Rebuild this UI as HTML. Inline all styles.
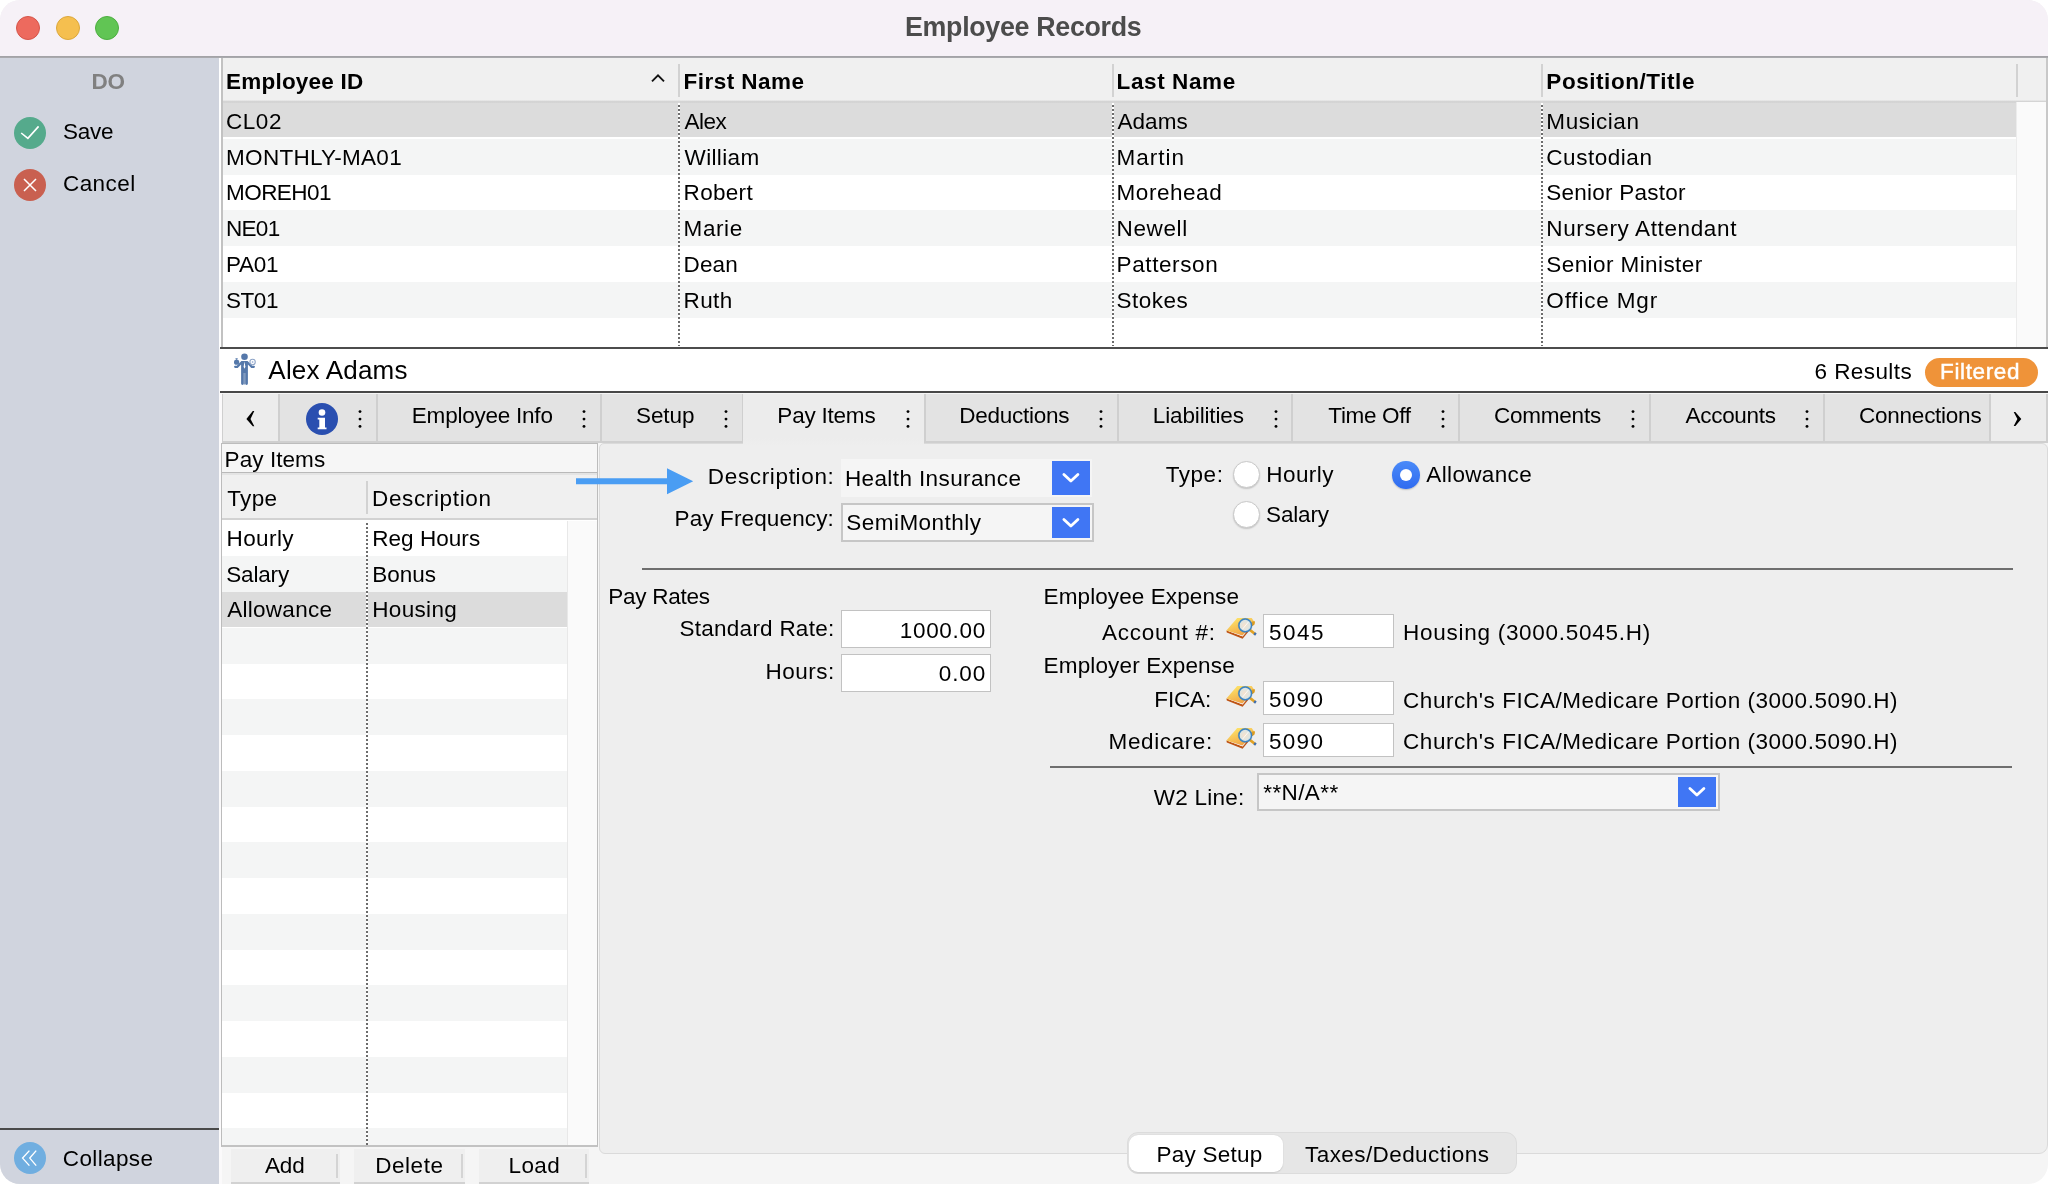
<!DOCTYPE html>
<html lang="en">
<head>
<meta charset="utf-8">
<title>Employee Records</title>
<style>
*{box-sizing:border-box;margin:0;padding:0}
html,body{width:2048px;height:1184px;overflow:hidden;background:#fff}
body{position:relative;font-family:"Liberation Sans",sans-serif;color:#000}
.win{position:absolute;left:0;top:0;width:2048px;height:1184px;border-radius:20px;overflow:hidden;background:#f5f5f5;will-change:transform}
.a{position:absolute}
.t{position:absolute;white-space:nowrap;line-height:30px;height:30px}
.titlebar{left:0;top:0;width:2048px;height:56px;background:#f6f1f7}
.tl{width:24px;height:24px;border-radius:50%;top:16px}
.sidebar{left:0;top:58px;width:219px;height:1126px;background:#d0d4de}
.row{left:222.6px;width:1793.4px}
.vdot{width:2px;background-image:linear-gradient(#fff 50%,#6c6c6c 50%);background-size:2px 4px}
.tab{top:394px;height:47px;background:#e3e3e3}
.tsep{top:394px;width:2px;height:47px;background:#cfcfcf}
.dots{width:4px;height:20px}
.inp{background:#fff;border:1.5px solid #c2c2c2}
.btn{background:#4076f4}
.pbtn{top:1149px;height:35px;background:#efefef;border-bottom:2px solid #d2d2d2}
.psep{top:1154px;width:2px;height:24px;background:#d4d4d4}
</style>
</head>
<body>
<div class="win">

<!-- ===== title bar ===== -->
<header class="a titlebar">
  <div class="a tl" style="left:16px;background:#ed6a5e;border:1px solid #d5554a"></div>
  <div class="a tl" style="left:56px;background:#f5bf4f;border:1px solid #dba73c"></div>
  <div class="a tl" style="left:95px;background:#61c554;border:1px solid #4dae41"></div>
</header>
<span class="t" style="left:905.00px;top:12.00px;font-size:26.8px;letter-spacing:-0.304px;font-weight:700;color:#4c4c4c">Employee Records</span>
<div class="a" style="left:0;top:55.8px;width:2048px;height:2px;background:linear-gradient(#a0a0a4,#acacb0)"></div>

<!-- ===== sidebar ===== -->
<aside class="a sidebar"></aside>
<svg class="a" style="left:14px;top:117px" width="32" height="32" viewBox="0 0 32 32"><circle cx="16" cy="16" r="16" fill="#55aa8c"/><path d="M7.2 16 L13.9 21.4 L24.6 9.4" fill="none" stroke="#fff" stroke-width="1.6"/></svg>
<svg class="a" style="left:14px;top:169px" width="32" height="32" viewBox="0 0 32 32"><circle cx="16" cy="16" r="16" fill="#c96050"/><path d="M10 10 L22 22 M22 10 L10 22" fill="none" stroke="#fff" stroke-width="1.5"/></svg>
<div class="a" style="left:0;top:1128px;width:219px;height:2px;background:#4a4a4a"></div>
<svg class="a" style="left:14px;top:1142px" width="32" height="32" viewBox="0 0 32 32"><circle cx="16" cy="16" r="16" fill="#70aee0"/><path d="M15.4 8.6 L8.6 16.1 L15.4 23.6 M22.2 8.6 L15.8 16.1 L22.2 23.6" fill="none" stroke="#fff" stroke-width="1.4"/></svg>
<span class="t" style="left:91.40px;top:67.00px;font-size:22.5px;letter-spacing:-0.149px;font-weight:700;color:#808080">DO</span>
<span class="t" style="left:63.00px;top:117.00px;font-size:22.5px;letter-spacing:-0.294px">Save</span>
<span class="t" style="left:63.00px;top:169.00px;font-size:22.5px;letter-spacing:0.430px">Cancel</span>
<span class="t" style="left:62.85px;top:1144.00px;font-size:22.5px;letter-spacing:0.372px">Collapse</span>

<div class="a" style="left:219px;top:58px;width:3px;height:1126px;background:#fbfafb"></div>
<!-- ===== main table ===== -->
<section>
<div class="a" style="left:219px;top:58px;width:1829px;height:290px;background:#fff"></div>
<div class="a" style="left:221px;top:58px;width:1.6px;height:290px;background:#c2c2c2"></div>
<div class="a" style="left:222.6px;top:58px;width:1823.4px;height:43px;background:#f0f0f0"></div>
<div class="a" style="left:222.6px;top:100.3px;width:1823.4px;height:3.2px;background:linear-gradient(#eee,#cfcfcf 60%,#d8d8d8)"></div>
<div class="a" style="left:2046px;top:58px;width:2px;height:290px;background:#c8c8c8"></div>
<div class="a" style="left:2016px;top:102px;width:30px;height:245px;background:#fafafa;border-left:1px solid #ececec"></div>
<!-- rows -->
<div class="a row" style="top:103.2px;height:34px;background:#dcdcdc"></div>
<div class="a row" style="top:138.75px;height:35.75px;background:#f4f5f5"></div>
<div class="a row" style="top:210.25px;height:35.75px;background:#f4f5f5"></div>
<div class="a row" style="top:281.75px;height:35.75px;background:#f4f5f5"></div>
<!-- header separators -->
<div class="a" style="left:678px;top:64px;width:2px;height:33px;background:#d2d2d2"></div>
<div class="a" style="left:1111.5px;top:64px;width:2px;height:33px;background:#d2d2d2"></div>
<div class="a" style="left:1541px;top:64px;width:2px;height:33px;background:#d2d2d2"></div>
<div class="a" style="left:2016px;top:64px;width:2px;height:33px;background:#d2d2d2"></div>
<!-- dotted column lines -->
<div class="a vdot" style="left:678px;top:103.4px;height:243px"></div>
<div class="a vdot" style="left:1111.5px;top:103.4px;height:243px"></div>
<div class="a vdot" style="left:1541px;top:103.4px;height:243px"></div>
<svg class="a" style="left:650px;top:73px" width="16" height="10" viewBox="0 0 16 10"><path d="M2 8.3 L8 2.3 L14 8.3" fill="none" stroke="#111" stroke-width="1.9"/></svg>
<span class="t" style="left:226.10px;top:67.00px;font-size:22.5px;letter-spacing:0.200px;font-weight:700">Employee ID</span>
<span class="t" style="left:683.60px;top:67.00px;font-size:22.5px;letter-spacing:0.446px;font-weight:700">First Name</span>
<span class="t" style="left:1116.60px;top:67.00px;font-size:22.5px;letter-spacing:0.596px;font-weight:700">Last Name</span>
<span class="t" style="left:1546.35px;top:67.00px;font-size:22.5px;letter-spacing:0.554px;font-weight:700">Position/Title</span>
<span class="t" style="left:226.10px;top:107.00px;font-size:22.5px;letter-spacing:0.506px">CL02</span>
<span class="t" style="left:684.60px;top:107.00px;font-size:22.5px;letter-spacing:-0.577px">Alex</span>
<span class="t" style="left:1117.60px;top:107.00px;font-size:22.5px;letter-spacing:0.005px">Adams</span>
<span class="t" style="left:1546.35px;top:107.00px;font-size:22.5px;letter-spacing:0.540px">Musician</span>
<span class="t" style="left:226.10px;top:143.00px;font-size:22.5px;letter-spacing:0.274px">MONTHLY-MA01</span>
<span class="t" style="left:684.60px;top:143.00px;font-size:22.5px;letter-spacing:0.340px">William</span>
<span class="t" style="left:1116.60px;top:143.00px;font-size:22.5px;letter-spacing:0.960px">Martin</span>
<span class="t" style="left:1546.35px;top:143.00px;font-size:22.5px;letter-spacing:0.529px">Custodian</span>
<span class="t" style="left:226.10px;top:178.00px;font-size:22.5px;letter-spacing:-0.578px">MOREH01</span>
<span class="t" style="left:683.60px;top:178.00px;font-size:22.5px;letter-spacing:0.301px">Robert</span>
<span class="t" style="left:1116.60px;top:178.00px;font-size:22.5px;letter-spacing:0.534px">Morehead</span>
<span class="t" style="left:1546.35px;top:178.00px;font-size:22.5px;letter-spacing:0.226px">Senior Pastor</span>
<span class="t" style="left:226.10px;top:214.00px;font-size:22.5px;letter-spacing:-0.744px">NE01</span>
<span class="t" style="left:683.60px;top:214.00px;font-size:22.5px;letter-spacing:0.574px">Marie</span>
<span class="t" style="left:1116.60px;top:214.00px;font-size:22.5px;letter-spacing:0.604px">Newell</span>
<span class="t" style="left:1546.35px;top:214.00px;font-size:22.5px;letter-spacing:0.621px">Nursery Attendant</span>
<span class="t" style="left:226.10px;top:250.00px;font-size:22.5px;letter-spacing:-0.354px">PA01</span>
<span class="t" style="left:683.60px;top:250.00px;font-size:22.5px;letter-spacing:0.089px">Dean</span>
<span class="t" style="left:1116.60px;top:250.00px;font-size:22.5px;letter-spacing:0.594px">Patterson</span>
<span class="t" style="left:1546.35px;top:250.00px;font-size:22.5px;letter-spacing:0.409px">Senior Minister</span>
<span class="t" style="left:226.10px;top:286.00px;font-size:22.5px;letter-spacing:-0.489px">ST01</span>
<span class="t" style="left:683.60px;top:286.00px;font-size:22.5px;letter-spacing:0.344px">Ruth</span>
<span class="t" style="left:1116.60px;top:286.00px;font-size:22.5px;letter-spacing:0.451px">Stokes</span>
<span class="t" style="left:1546.35px;top:286.00px;font-size:22.5px;letter-spacing:0.826px">Office Mgr</span>
</section>
<div class="a" style="left:220px;top:346.8px;width:1828px;height:2.6px;background:#4c4c4c"></div>

<!-- ===== name bar ===== -->
<section>
<div class="a" style="left:220px;top:349.4px;width:1828px;height:41.6px;background:#fff"></div>
<svg class="a" style="left:232px;top:352px" width="26" height="36" viewBox="0 0 26 36">
 <g fill="#5578aa">
  <circle cx="12.5" cy="4.7" r="3.3"/>
  <path d="M9.4 9 H15.6 L20.2 13.8 H21.9 a1.05 1.05 0 0 1 0 2.1 H19.3 L15.9 12.6 V31.6 a1.35 1.35 0 0 1 -2.7 0 V21 h-1.4 V31.6 a1.35 1.35 0 0 1 -2.7 0 V12.6 L5.7 15.9 H3.1 a1.05 1.05 0 0 1 0 -2.1 H4.8 Z"/>
  <rect x="11.8" y="20" width="1.4" height="12.5" opacity=".75"/>
  <circle cx="4.6" cy="10.2" r="2.6"/>
  <path d="M3.2 6.3 l1.4 1.7 l1.4 -1.7 z"/>
 </g>
 <circle cx="20.6" cy="10" r="2.7" fill="#fff" stroke="#8fa5c8" stroke-width="1.1"/>
 <circle cx="20.6" cy="10" r="0.9" fill="#a9badb"/>
 <path d="M12.5 9.4 l0.9 5.4 l-0.9 1.9 l-0.9 -1.9 z" fill="#fff"/>
</svg>
<div class="a" style="left:1924.5px;top:358px;width:113.5px;height:29px;border-radius:14.5px;background:#ef9339"></div>
<span class="t" style="left:268.35px;top:355.00px;font-size:26px;letter-spacing:0.195px">Alex Adams</span>
<span class="t" style="left:1814.60px;top:357.00px;font-size:22.5px;letter-spacing:0.407px">6 Results</span>
<span class="t" style="left:1940.10px;top:357.00px;font-size:22.5px;letter-spacing:0.612px;-webkit-text-stroke:0.45px #fff;color:#fff">Filtered</span>
</section>
<div class="a" style="left:220px;top:390.7px;width:1828px;height:2.4px;background:#484848"></div>

<!-- ===== tab bar ===== -->
<nav>
<div class="a" style="left:222px;top:393.5px;width:1826px;height:49.5px;background:#cfcfcf"></div>
<div class="a tab" style="left:223px;width:55px;background:#ececec"></div>
<div class="a tab" style="left:280px;width:95.5px"></div>
<div class="a tab" style="left:377.5px;width:222px"></div>
<div class="a tab" style="left:601.5px;width:140px"></div>
<div class="a tab" style="left:743px;width:181px;background:#ececec;height:50px"></div>
<div class="a tab" style="left:926px;width:190.5px"></div>
<div class="a tab" style="left:1118.5px;width:172px"></div>
<div class="a tab" style="left:1292.5px;width:165px"></div>
<div class="a tab" style="left:1459.5px;width:189px"></div>
<div class="a tab" style="left:1650.5px;width:172px"></div>
<div class="a tab" style="left:1824.5px;width:164.5px"></div>
<div class="a tab" style="left:1991px;width:54.5px;background:#ececec"></div>
<svg class="a" style="left:244px;top:408px" width="14" height="22" viewBox="0 0 14 22"><path d="M8.8 3.1 L2.4 10.95 L8.8 18.2 L10.3 18.2 L6.5 10.95 L10.3 3.1 Z" fill="#000"/></svg>
<svg class="a" style="left:2010px;top:408px" width="14" height="22" viewBox="0 0 14 22"><path d="M3.7 4.1 L5.3 4.1 L11.3 10.95 L5.4 18.1 L3.7 18.1 L7.4 10.95 Z" fill="#000"/></svg>
<svg class="a" style="left:306px;top:403px" width="32" height="32" viewBox="0 0 32 32"><circle cx="16" cy="16" r="16" fill="#2a4fb0"/><circle cx="16" cy="9.5" r="3.3" fill="#fff"/><path d="M11.7 14.8 h7.3 v9.6 h1.5 v1.8 h-8.8 v-1.8 h1.6 v-7.8 h-1.6 z" fill="#fff"/></svg>
<svg class="a dots" style="left:358px;top:408.5px" width="4" height="20" viewBox="0 0 4 20"><circle cx="2" cy="2.6" r="1.45"/><circle cx="2" cy="10.1" r="1.45"/><circle cx="2" cy="17.4" r="1.45"/></svg>
<svg class="a dots" style="left:582.25px;top:408.5px" width="4" height="20" viewBox="0 0 4 20"><circle cx="2" cy="2.6" r="1.45"/><circle cx="2" cy="10.1" r="1.45"/><circle cx="2" cy="17.4" r="1.45"/></svg>
<svg class="a dots" style="left:723.75px;top:408.5px" width="4" height="20" viewBox="0 0 4 20"><circle cx="2" cy="2.6" r="1.45"/><circle cx="2" cy="10.1" r="1.45"/><circle cx="2" cy="17.4" r="1.45"/></svg>
<svg class="a dots" style="left:905.5px;top:408.5px" width="4" height="20" viewBox="0 0 4 20"><circle cx="2" cy="2.6" r="1.45"/><circle cx="2" cy="10.1" r="1.45"/><circle cx="2" cy="17.4" r="1.45"/></svg>
<svg class="a dots" style="left:1099.25px;top:408.5px" width="4" height="20" viewBox="0 0 4 20"><circle cx="2" cy="2.6" r="1.45"/><circle cx="2" cy="10.1" r="1.45"/><circle cx="2" cy="17.4" r="1.45"/></svg>
<svg class="a dots" style="left:1273.75px;top:408.5px" width="4" height="20" viewBox="0 0 4 20"><circle cx="2" cy="2.6" r="1.45"/><circle cx="2" cy="10.1" r="1.45"/><circle cx="2" cy="17.4" r="1.45"/></svg>
<svg class="a dots" style="left:1440.5px;top:408.5px" width="4" height="20" viewBox="0 0 4 20"><circle cx="2" cy="2.6" r="1.45"/><circle cx="2" cy="10.1" r="1.45"/><circle cx="2" cy="17.4" r="1.45"/></svg>
<svg class="a dots" style="left:1631px;top:408.5px" width="4" height="20" viewBox="0 0 4 20"><circle cx="2" cy="2.6" r="1.45"/><circle cx="2" cy="10.1" r="1.45"/><circle cx="2" cy="17.4" r="1.45"/></svg>
<svg class="a dots" style="left:1805.25px;top:408.5px" width="4" height="20" viewBox="0 0 4 20"><circle cx="2" cy="2.6" r="1.45"/><circle cx="2" cy="10.1" r="1.45"/><circle cx="2" cy="17.4" r="1.45"/></svg>
<span class="t" style="left:411.85px;top:401.00px;font-size:22.5px;letter-spacing:-0.232px">Employee Info</span>
<span class="t" style="left:636.10px;top:401.00px;font-size:22.5px;letter-spacing:-0.125px">Setup</span>
<span class="t" style="left:777.35px;top:401.00px;font-size:22.5px;letter-spacing:-0.216px">Pay Items</span>
<span class="t" style="left:959.35px;top:401.00px;font-size:22.5px;letter-spacing:-0.281px">Deductions</span>
<span class="t" style="left:1152.85px;top:401.00px;font-size:22.5px;letter-spacing:-0.151px">Liabilities</span>
<span class="t" style="left:1328.35px;top:401.00px;font-size:22.5px;letter-spacing:-0.352px">Time Off</span>
<span class="t" style="left:1494.10px;top:401.00px;font-size:22.5px;letter-spacing:-0.247px">Comments</span>
<span class="t" style="left:1685.60px;top:401.00px;font-size:22.5px;letter-spacing:-0.323px">Accounts</span>
<span class="t" style="left:1859.10px;top:401.00px;font-size:22.5px;letter-spacing:-0.254px">Connections</span>
</nav>

<!-- ===== pay items list ===== -->
<section>
<div class="a" style="left:221.2px;top:443.3px;width:377.3px;height:703.7px;background:#fff"></div>
<div class="a" style="left:221.5px;top:443.5px;width:376.7px;height:28.4px;background:#f6f6f6"></div>
<div class="a" style="left:221.5px;top:471.9px;width:376.7px;height:2.9px;background:linear-gradient(#b9b9b9 0,#b9b9b9 42%,#e4e4e4 43%)"></div>
<div class="a" style="left:221.5px;top:474.8px;width:376.7px;height:43.2px;background:#f0f0f0"></div>
<div class="a" style="left:221.5px;top:517.8px;width:376.7px;height:2.4px;background:#d2d2d2"></div>
<div class="a" style="left:366px;top:481px;width:2px;height:33px;background:#d2d2d2"></div>
<div class="a" style="left:567px;top:520.5px;width:29.5px;height:625px;background:#fafafa;border-left:1px solid #e8e8e8"></div>
<div class="a" style="left:221.5px;top:556.25px;width:345.5px;height:35.75px;background:#f4f5f5"></div>
<div class="a" style="left:221.5px;top:592.0px;width:345.5px;height:35.25px;background:#dcdcdc"></div>
<div class="a" style="left:221.5px;top:627.75px;width:345.5px;height:35.75px;background:#f4f5f5"></div>
<div class="a" style="left:221.5px;top:699.25px;width:345.5px;height:35.75px;background:#f4f5f5"></div>
<div class="a" style="left:221.5px;top:770.75px;width:345.5px;height:35.75px;background:#f4f5f5"></div>
<div class="a" style="left:221.5px;top:842.25px;width:345.5px;height:35.75px;background:#f4f5f5"></div>
<div class="a" style="left:221.5px;top:913.75px;width:345.5px;height:35.75px;background:#f4f5f5"></div>
<div class="a" style="left:221.5px;top:985.25px;width:345.5px;height:35.75px;background:#f4f5f5"></div>
<div class="a" style="left:221.5px;top:1056.75px;width:345.5px;height:35.75px;background:#f4f5f5"></div>
<div class="a" style="left:221.5px;top:1128.25px;width:345.5px;height:16.75px;background:#f4f5f5"></div>
<div class="a vdot" style="left:366px;top:521px;height:624px"></div>
<div class="a" style="left:221.2px;top:443.3px;width:377.3px;height:703.7px;border:1.3px solid #bcbcbc;border-bottom:2px solid #c2c2c2"></div>
<div class="a pbtn" style="left:230.5px;width:109px"></div>
<div class="a pbtn" style="left:353.5px;width:111.5px"></div>
<div class="a pbtn" style="left:479px;width:110px"></div>
<div class="a psep" style="left:336px"></div>
<div class="a psep" style="left:461px"></div>
<div class="a psep" style="left:585px"></div>
<span class="t" style="left:224.60px;top:445.00px;font-size:22.5px;letter-spacing:0.065px">Pay Items</span>
<span class="t" style="left:227.20px;top:484.00px;font-size:22.5px;letter-spacing:0.344px">Type</span>
<span class="t" style="left:372.10px;top:484.00px;font-size:22.5px;letter-spacing:0.627px">Description</span>
<span class="t" style="left:226.60px;top:524.00px;font-size:22.5px;letter-spacing:0.384px">Hourly</span>
<span class="t" style="left:372.20px;top:524.00px;font-size:22.5px;letter-spacing:0.050px">Reg Hours</span>
<span class="t" style="left:226.20px;top:560.00px;font-size:22.5px;letter-spacing:-0.166px">Salary</span>
<span class="t" style="left:372.20px;top:560.00px;font-size:22.5px;letter-spacing:0.034px">Bonus</span>
<span class="t" style="left:227.20px;top:595.00px;font-size:22.5px;letter-spacing:0.281px">Allowance</span>
<span class="t" style="left:372.20px;top:595.00px;font-size:22.5px;letter-spacing:0.342px">Housing</span>
<span class="t" style="left:265.10px;top:1151.00px;font-size:22.5px;letter-spacing:-0.242px">Add</span>
<span class="t" style="left:375.35px;top:1151.00px;font-size:22.5px;letter-spacing:0.503px">Delete</span>
<span class="t" style="left:508.60px;top:1151.00px;font-size:22.5px;letter-spacing:0.334px">Load</span>
</section>

<!-- ===== form pane ===== -->
<main>
<div class="a" style="left:598.5px;top:442.5px;width:1449px;height:711px;background:#eee;border:1.3px solid #dadada;border-radius:5px 6px 9px 6px"></div>
<div class="a" style="left:743px;top:438px;width:181px;height:8px;background:linear-gradient(#ececec,#eee)"></div>
<svg class="a" style="left:574px;top:466px" width="122" height="30" viewBox="0 0 122 30"><path d="M2 12.2 H93 V2.2 L119.2 15.2 L93 28.3 V18.3 H2 Z" fill="#4a9df3"/></svg>
<!-- description combo -->
<div class="a" style="left:841px;top:458.5px;width:251px;height:38.5px;background:#f5f5f5"></div>
<div class="a btn" style="left:1052px;top:461px;width:38px;height:33.7px"></div>
<svg class="a" style="left:1060px;top:470px" width="22" height="15" viewBox="0 0 22 15"><path d="M3.9 4.5 L10.9 11.1 L17.9 4.5" fill="none" stroke="#fff" stroke-width="2.8" stroke-linecap="round" stroke-linejoin="round"/></svg>
<!-- pay frequency combo -->
<div class="a" style="left:840.5px;top:503px;width:253.5px;height:39px;background:#f5f5f5;border:2px solid #c6c6c6"></div>
<div class="a btn" style="left:1052px;top:507px;width:38px;height:31px"></div>
<svg class="a" style="left:1060px;top:514.6px" width="22" height="15" viewBox="0 0 22 15"><path d="M3.9 4.5 L10.9 11.1 L17.9 4.5" fill="none" stroke="#fff" stroke-width="2.8" stroke-linecap="round" stroke-linejoin="round"/></svg>
<!-- radios -->
<div class="a" style="left:1233px;top:461.2px;width:27px;height:27px;border-radius:50%;background:#fff;border:1px solid #c9c9c9;box-shadow:0 1px 1.5px rgba(0,0,0,.18)"></div>
<div class="a" style="left:1233px;top:500.5px;width:27px;height:27px;border-radius:50%;background:#fff;border:1px solid #c9c9c9;box-shadow:0 1px 1.5px rgba(0,0,0,.18)"></div>
<div class="a" style="left:1392px;top:461.2px;width:27.5px;height:27.5px;border-radius:50%;background:linear-gradient(#4a8af8,#2f6bf0);box-shadow:0 1px 1.5px rgba(0,0,0,.2)"></div>
<div class="a" style="left:1399.5px;top:468.7px;width:12.5px;height:12.5px;border-radius:50%;background:#fff"></div>
<!-- rules -->
<div class="a" style="left:641.5px;top:567.8px;width:1371px;height:2px;background:#6e6e6e"></div>
<div class="a" style="left:1050px;top:766.3px;width:962px;height:2px;background:#6e6e6e"></div>
<!-- inputs -->
<div class="a inp" style="left:841px;top:610px;width:149.5px;height:37.5px"></div>
<div class="a inp" style="left:841px;top:654px;width:149.5px;height:37.5px"></div>
<div class="a inp" style="left:1262.5px;top:614px;width:131.5px;height:33.5px"></div>
<div class="a inp" style="left:1262.5px;top:681px;width:131.5px;height:34px"></div>
<div class="a inp" style="left:1262.5px;top:723px;width:131.5px;height:34px"></div>
<svg class="a" style="left:1225px;top:616px" width="32" height="24" viewBox="0 0 32 24">
<defs><linearGradient id="bk0" x1="0" y1="0" x2="0.6" y2="1"><stop offset="0" stop-color="#ffee6e"/><stop offset="1" stop-color="#f0a044"/></linearGradient>
<radialGradient id="gl0" cx="0.45" cy="0.5" r="0.6"><stop offset="0" stop-color="#f8e2cc"/><stop offset="1" stop-color="#cfe6ee"/></radialGradient></defs>
<path d="M1.4 14.6 L1.8 16.6 L17.6 22.7 L23.6 15.6 L22.2 14.8 L17.6 20.3 Z" fill="#bf5414"/>
<path d="M4 15.2 L17.6 20.6 L20.5 17 L8 13 Z" fill="#f4f4fa"/>
<path d="M12.2 2 H26.7 L30 6.9 L17.4 19.6 L1.4 14.6 Z" fill="url(#bk0)"/>
<path d="M27.2 5.6 l2.8 -0.4 l-0.6 3.6 l-2.4 1.4 z" fill="#d89a20"/>
<path d="M24.5 13.6 L30.4 18.2" stroke="#e2a224" stroke-width="2.6" stroke-linecap="butt"/>
<path d="M29.2 17.3 L30.9 18.6" stroke="#3c6eb0" stroke-width="2.6"/>
<circle cx="20.2" cy="9.4" r="6.3" fill="url(#gl0)" stroke="#3f86c4" stroke-width="1.5"/>
<circle cx="20.2" cy="9.4" r="7" fill="none" stroke="#2f6aa8" stroke-width="0.4" opacity=".6"/>
<path d="M17.5 13.2 L23.6 5.8" stroke="#fff" stroke-width="1" opacity=".8"/>
</svg>
<svg class="a" style="left:1225px;top:684.2px" width="32" height="24" viewBox="0 0 32 24">
<defs><linearGradient id="bk1" x1="0" y1="0" x2="0.6" y2="1"><stop offset="0" stop-color="#ffee6e"/><stop offset="1" stop-color="#f0a044"/></linearGradient>
<radialGradient id="gl1" cx="0.45" cy="0.5" r="0.6"><stop offset="0" stop-color="#f8e2cc"/><stop offset="1" stop-color="#cfe6ee"/></radialGradient></defs>
<path d="M1.4 14.6 L1.8 16.6 L17.6 22.7 L23.6 15.6 L22.2 14.8 L17.6 20.3 Z" fill="#bf5414"/>
<path d="M4 15.2 L17.6 20.6 L20.5 17 L8 13 Z" fill="#f4f4fa"/>
<path d="M12.2 2 H26.7 L30 6.9 L17.4 19.6 L1.4 14.6 Z" fill="url(#bk1)"/>
<path d="M27.2 5.6 l2.8 -0.4 l-0.6 3.6 l-2.4 1.4 z" fill="#d89a20"/>
<path d="M24.5 13.6 L30.4 18.2" stroke="#e2a224" stroke-width="2.6" stroke-linecap="butt"/>
<path d="M29.2 17.3 L30.9 18.6" stroke="#3c6eb0" stroke-width="2.6"/>
<circle cx="20.2" cy="9.4" r="6.3" fill="url(#gl1)" stroke="#3f86c4" stroke-width="1.5"/>
<circle cx="20.2" cy="9.4" r="7" fill="none" stroke="#2f6aa8" stroke-width="0.4" opacity=".6"/>
<path d="M17.5 13.2 L23.6 5.8" stroke="#fff" stroke-width="1" opacity=".8"/>
</svg>
<svg class="a" style="left:1225px;top:726px" width="32" height="24" viewBox="0 0 32 24">
<defs><linearGradient id="bk2" x1="0" y1="0" x2="0.6" y2="1"><stop offset="0" stop-color="#ffee6e"/><stop offset="1" stop-color="#f0a044"/></linearGradient>
<radialGradient id="gl2" cx="0.45" cy="0.5" r="0.6"><stop offset="0" stop-color="#f8e2cc"/><stop offset="1" stop-color="#cfe6ee"/></radialGradient></defs>
<path d="M1.4 14.6 L1.8 16.6 L17.6 22.7 L23.6 15.6 L22.2 14.8 L17.6 20.3 Z" fill="#bf5414"/>
<path d="M4 15.2 L17.6 20.6 L20.5 17 L8 13 Z" fill="#f4f4fa"/>
<path d="M12.2 2 H26.7 L30 6.9 L17.4 19.6 L1.4 14.6 Z" fill="url(#bk2)"/>
<path d="M27.2 5.6 l2.8 -0.4 l-0.6 3.6 l-2.4 1.4 z" fill="#d89a20"/>
<path d="M24.5 13.6 L30.4 18.2" stroke="#e2a224" stroke-width="2.6" stroke-linecap="butt"/>
<path d="M29.2 17.3 L30.9 18.6" stroke="#3c6eb0" stroke-width="2.6"/>
<circle cx="20.2" cy="9.4" r="6.3" fill="url(#gl2)" stroke="#3f86c4" stroke-width="1.5"/>
<circle cx="20.2" cy="9.4" r="7" fill="none" stroke="#2f6aa8" stroke-width="0.4" opacity=".6"/>
<path d="M17.5 13.2 L23.6 5.8" stroke="#fff" stroke-width="1" opacity=".8"/>
</svg>
<!-- W2 combo -->
<div class="a" style="left:1256.5px;top:772.5px;width:463.5px;height:38.5px;background:#f5f5f5;border:2px solid #c6c6c6"></div>
<div class="a btn" style="left:1678px;top:776.5px;width:38px;height:30.5px"></div>
<svg class="a" style="left:1686px;top:784px" width="22" height="15" viewBox="0 0 22 15"><path d="M3.9 4.5 L10.9 11.1 L17.9 4.5" fill="none" stroke="#fff" stroke-width="2.8" stroke-linecap="round" stroke-linejoin="round"/></svg>
<!-- segmented -->
<div class="a" style="left:1127px;top:1132px;width:390px;height:42px;border-radius:11px;background:#e6e6e6;border:1px solid #dcdcdc"></div>
<div class="a" style="left:1128.5px;top:1134.5px;width:154px;height:37.5px;border-radius:9px;background:#fff;box-shadow:0 0.5px 1.5px rgba(0,0,0,.12)"></div>
<span class="t" style="left:707.85px;top:462.00px;font-size:22.5px;letter-spacing:0.655px">Description:</span>
<span class="t" style="left:844.90px;top:464.00px;font-size:22.5px;letter-spacing:0.394px">Health Insurance</span>
<span class="t" style="left:674.50px;top:504.00px;font-size:22.5px;letter-spacing:0.136px">Pay Frequency:</span>
<span class="t" style="left:846.35px;top:508.00px;font-size:22.5px;letter-spacing:0.450px">SemiMonthly</span>
<span class="t" style="left:1165.85px;top:460.00px;font-size:22.5px;letter-spacing:0.505px">Type:</span>
<span class="t" style="left:1266.35px;top:460.00px;font-size:22.5px;letter-spacing:0.404px">Hourly</span>
<span class="t" style="left:1266.10px;top:500.00px;font-size:22.5px;letter-spacing:-0.166px">Salary</span>
<span class="t" style="left:1426.35px;top:460.00px;font-size:22.5px;letter-spacing:0.344px">Allowance</span>
<span class="t" style="left:608.35px;top:582.00px;font-size:22.5px;letter-spacing:-0.264px">Pay Rates</span>
<span class="t" style="left:679.60px;top:614.00px;font-size:22.5px;letter-spacing:0.246px">Standard Rate:</span>
<span class="t" style="left:899.85px;top:616.00px;font-size:22.5px;letter-spacing:0.662px">1000.00</span>
<span class="t" style="left:765.50px;top:657.00px;font-size:22.5px;letter-spacing:0.474px">Hours:</span>
<span class="t" style="left:938.85px;top:659.00px;font-size:22.5px;letter-spacing:0.839px">0.00</span>
<span class="t" style="left:1043.60px;top:582.00px;font-size:22.5px;letter-spacing:0.096px">Employee Expense</span>
<span class="t" style="left:1102.10px;top:618.00px;font-size:22.5px;letter-spacing:0.719px">Account #:</span>
<span class="t" style="left:1269.10px;top:618.00px;font-size:22.5px;letter-spacing:1.417px">5045</span>
<span class="t" style="left:1403.10px;top:618.00px;font-size:22.5px;letter-spacing:0.722px">Housing (3000.5045.H)</span>
<span class="t" style="left:1043.60px;top:651.00px;font-size:22.5px;letter-spacing:0.147px">Employer Expense</span>
<span class="t" style="left:1154.35px;top:685.00px;font-size:22.5px;letter-spacing:-0.179px">FICA:</span>
<span class="t" style="left:1269.10px;top:685.00px;font-size:22.5px;letter-spacing:1.250px">5090</span>
<span class="t" style="left:1403.10px;top:686.00px;font-size:22.5px;letter-spacing:0.523px">Church's FICA/Medicare Portion (3000.5090.H)</span>
<span class="t" style="left:1108.60px;top:727.00px;font-size:22.5px;letter-spacing:0.594px">Medicare:</span>
<span class="t" style="left:1269.10px;top:727.00px;font-size:22.5px;letter-spacing:1.250px">5090</span>
<span class="t" style="left:1403.10px;top:727.00px;font-size:22.5px;letter-spacing:0.523px">Church's FICA/Medicare Portion (3000.5090.H)</span>
<span class="t" style="left:1153.85px;top:783.00px;font-size:22.5px;letter-spacing:0.215px">W2 Line:</span>
<span class="t" style="left:1263.35px;top:778.00px;font-size:22.5px;letter-spacing:0.377px">**N/A**</span>
<span class="t" style="left:1156.60px;top:1140.00px;font-size:22.5px;letter-spacing:0.217px">Pay Setup</span>
<span class="t" style="left:1305.10px;top:1140.00px;font-size:22.5px;letter-spacing:0.413px">Taxes/Deductions</span>
</main>

</div>
</body>
</html>
